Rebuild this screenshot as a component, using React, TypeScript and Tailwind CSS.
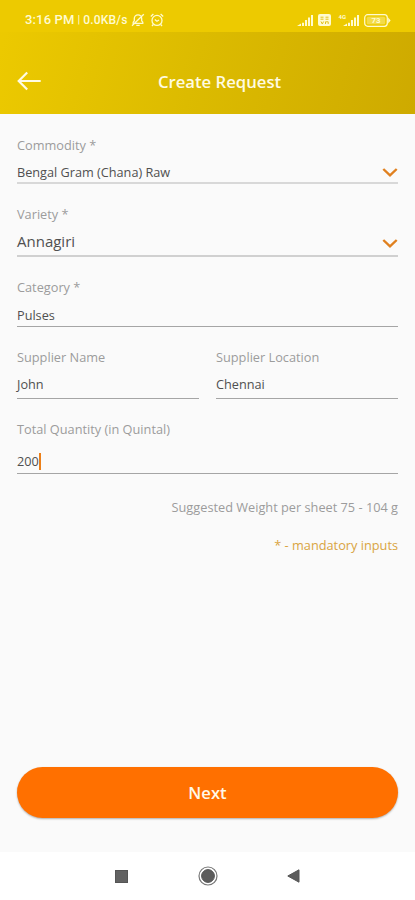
import type { ReactNode } from 'react';
import clsx from 'clsx';

interface FieldProps {
  label: string;
  value: string;
  className?: string;
  valueClass?: string;
  lineClass?: string;
  trailing?: ReactNode;
  focused?: boolean;
}

function Chevron({ className }: { className?: string }) {
  return (
    <svg width="16" height="11" viewBox="0 0 16 11" fill="none" className={clsx('shrink-0', className)}>
      <path d="M1.3 2 8 8.4 14.7 2" stroke="#e0801f" strokeWidth="2.4" />
    </svg>
  );
}

function Field({
  label,
  value,
  className,
  valueClass = 'text-[12.7px]',
  lineClass = 'border-b border-[#a5a5a5]',
  trailing,
  focused,
}: FieldProps) {
  return (
    <div className={clsx('flex flex-col justify-between', lineClass, className)}>
      <label className="h-5 text-[12.75px] leading-5 whitespace-nowrap text-[#9c9c9c]">{label}</label>
      <div className="flex h-5 items-center justify-between">
        <div className={clsx('flex items-center leading-5 whitespace-nowrap text-[#505050]', valueClass)}>
          {value}
          {focused && <span className="h-[17px] w-[2px] bg-[#ec7f18]" />}
        </div>
        {trailing}
      </div>
    </div>
  );
}

function Signal() {
  return (
    <svg width="17" height="12" viewBox="0 0 17 12" fill="#fffbd0">
      <path d="M0 12 4 9.5V12zM5 8.8h2V12H5zM8 6h2v6H8zM11 3.5h2V12h-2zM14 1h2v11h-2z" />
    </svg>
  );
}

function StatusBar() {
  return (
    <div className="flex h-8 items-start justify-between bg-[#edca00] pt-3 pr-[24px] pl-[25px] font-['Roboto',sans-serif] text-[#fffbd0]">
      <div className="flex h-4 items-center whitespace-nowrap">
        <span className="text-[13px] font-medium tracking-[0.15px]">3:16 PM</span>
        <span className="mx-[3px] text-[11px]">|</span>
        <span className="text-[12px] font-medium tracking-[0.2px]">0.0KB/s</span>
        <svg width="14" height="14" viewBox="0 0 14 14" fill="none" stroke="currentColor" className="ml-[3px]">
          <path
            d="M2.2 10.3V9.2l1.1-1.4V5.6A3.7 3.7 0 0 1 7 1.8a3.7 3.7 0 0 1 3.7 3.8v2.2l1.1 1.4v1.1zM5.3 12.4h3.4M1 12.8 12.8 1.2"
            strokeWidth="1.3"
          />
        </svg>
        <svg width="14" height="14" viewBox="0 0 14 14" fill="none" stroke="currentColor" className="ml-[5px]">
          <circle cx="7" cy="7.4" r="5" strokeWidth="1.3" />
          <path d="M.8 3.4 3.4 1M10.6 1l2.6 2.4M4.8 6.5 7 8.3l2-1.3M3.3 11.5 2 13M10.7 11.5 12 13" strokeWidth="1.3" />
        </svg>
      </div>
      <div className="flex h-4 items-center">
        <Signal />
        <svg width="13" height="12" viewBox="0 0 13 12" className="ml-[4px]">
          <rect width="13" height="12" rx="2" fill="#fffbd0" />
          <path
            d="M2.5 3.2h3M7.5 3.2h3M2.5 5.2h3M7.5 5.2h3M3 7.5 4.3 10 5.6 7.5M7.5 10V7.8h2.7V10"
            fill="none"
            stroke="#e2c11b"
          />
        </svg>
        <div className="ml-[7px] flex">
          <span className="-mt-[1px] -mr-[3px] h-2 text-[6px] leading-[7px] font-bold">4G</span>
          <Signal />
        </div>
        <svg width="27" height="13" viewBox="0 0 27 13" className="ml-[4px]">
          <rect x=".7" y=".7" width="22.6" height="11.6" rx="3" fill="none" stroke="#fffbd0" strokeWidth="1.2" />
          <rect x="2.8" y="2.8" width="18.4" height="7.4" rx="1.5" fill="#fffbd0" fillOpacity=".35" />
          <path d="M24.2 3.5 26.6 6.5l-2.4 3z" fill="#fffbd0" />
          <text x="12" y="9.4" textAnchor="middle" fontFamily="Roboto" fontSize="8" fontWeight="700" fill="#fffbd0">
            73
          </text>
        </svg>
      </div>
    </div>
  );
}

function Header() {
  return (
    <header className="h-[114px] bg-linear-[105deg,#edca00_0%,#dcbb00_48%,#ceaa00_100%]">
      <StatusBar />
      <div className="grid h-[82px] grid-cols-[60px_1fr_53px] items-center pb-[2px] pl-[17px]">
        <svg width="25" height="20" viewBox="0 0 25 20" fill="none" stroke="#fffbe2" strokeWidth="2.2" className="mt-[18px]">
          <path d="M10.2 1.5 1.7 10l8.5 8.5M1.7 10h22" />
        </svg>
        <h1 className="mt-[20px] text-center text-[16.7px] leading-6 font-semibold text-[#fffbe2]">Create Request</h1>
      </div>
    </header>
  );
}

function NavBar() {
  return (
    <nav className="flex h-[48px] items-center justify-between bg-white px-[115px]">
      <span className="size-[13px] border border-[#555] bg-[#626262]" />
      <svg width="20" height="20" viewBox="0 0 20 20">
        <circle cx="10" cy="10" r="9" fill="none" stroke="#777" strokeWidth="1.2" />
        <circle cx="10" cy="10" r="6.4" fill="#5c5c5c" stroke="#555" />
      </svg>
      <svg width="13" height="14" viewBox="0 0 13 14">
        <path d="M12 .8v12.4L.8 7z" fill="#5c5c5c" stroke="#555" />
      </svg>
    </nav>
  );
}

export default function App() {
  return (
    <div className="flex h-[900px] w-full flex-col overflow-hidden bg-[#fafafa] font-['Open_Sans',sans-serif]">
      <Header />
      <main className="flex flex-1 flex-col px-[17px] pt-[21px]">
        <Field
          label="Commodity *"
          value="Bengal Gram (Chana) Raw"
          className="h-[49px]"
          lineClass="border-b-2 border-[#d8d8d8]"
          trailing={<Chevron />}
        />
        <Field
          label="Variety *"
          value="Annagiri"
          className="mt-5 h-[53px] pb-[4px]"
          valueClass="text-[15px]"
          lineClass="border-b-2 border-[#d0d0d0]"
          trailing={<Chevron className="mt-[4px]" />}
        />
        <Field label="Category *" value="Pulses" className="mt-5 h-[50px] pb-[1px]" />
        <div className="mt-5 grid grid-cols-2 gap-[17px]">
          <Field label="Supplier Name" value="John" className="h-[52px] pb-[4px]" />
          <Field label="Supplier Location" value="Chennai" className="h-[52px] pb-[4px]" />
        </div>
        <Field label="Total Quantity (in Quintal)" value="200" className="mt-5 h-[55px] pb-[2px]" focused />
        <p className="mt-[23px] text-right text-[12.75px] leading-5 text-[#9c9c9c]">
          Suggested Weight per sheet 75 - 104 g
        </p>
        <p className="mt-[18px] text-right text-[12.75px] leading-5 text-[#d9a441]">* - mandatory inputs</p>
        <button className="mt-auto mb-[34px] h-[51px] shrink-0 rounded-full bg-[#ff7000] pt-[2px] text-[16.6px] font-semibold text-[#fff8e8] shadow-[0_1px_2px_rgba(0,0,0,0.3)]">
          Next
        </button>
      </main>
      <NavBar />
    </div>
  );
}
